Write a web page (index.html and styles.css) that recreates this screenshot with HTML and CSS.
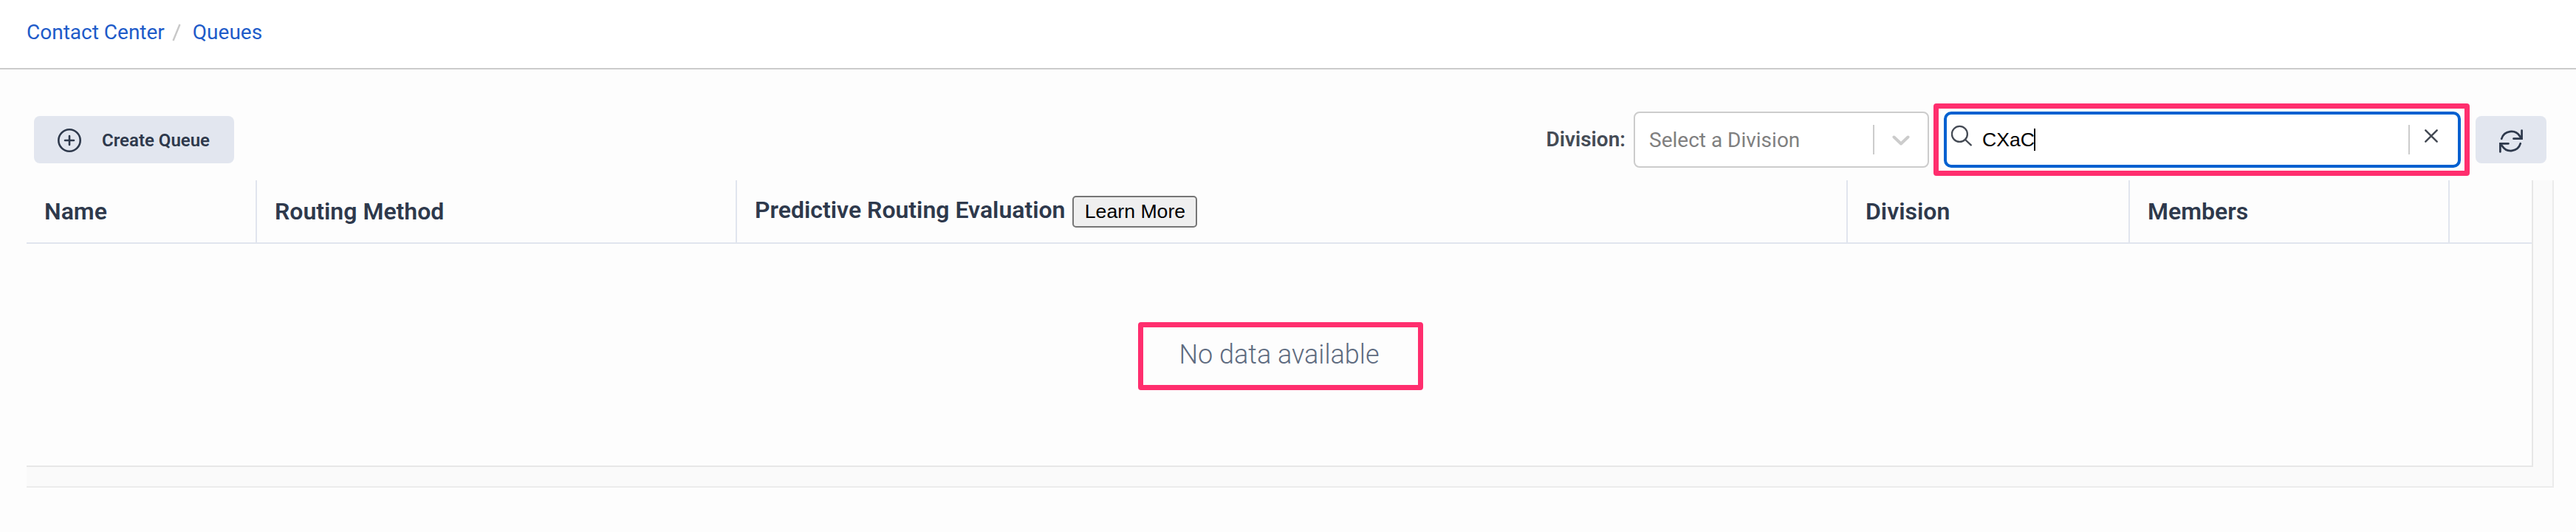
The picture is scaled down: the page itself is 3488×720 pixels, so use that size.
FILE: index.html
```html
<!DOCTYPE html>
<html lang="en">
<head>
<meta charset="utf-8">
<title>Queues</title>
<link rel="stylesheet" href="styles.css">
</head>
<body>
<header class="topbar">
  <nav class="breadcrumb">
    <a class="crumb" href="#">Contact Center</a>
    <svg class="slash" width="12" height="24" viewBox="0 0 12 24"><path d="M10.500 1 1.500 23" stroke="#c8c8c8" stroke-width="2.400"/></svg>
    <a class="crumb" href="#">Queues</a>
  </nav>
</header>
<main class="content">
  <div class="toolbar">
    <button class="btn create">
      <svg width="32" height="32" viewBox="0 0 32 32" fill="none" stroke="#2e394c" stroke-width="2.600" stroke-linecap="round"><circle cx="16" cy="16" r="14.700"/><path d="M16 10v12M10 16h12"/></svg>
      <span class="create-label">Create Queue</span>
    </button>
    <div class="filters">
      <span class="filter-label">Division:</span>
      <div class="select">
        <span class="placeholder">Select a Division</span>
        <span class="separator"></span>
        <svg class="chevron" width="24" height="16" viewBox="0 0 24 16" fill="none" stroke="#ccc" stroke-width="4" stroke-linecap="round" stroke-linejoin="round"><path d="M2.500 3.500 12 12.500l9.500-9"/></svg>
      </div>
      <div class="search-highlight">
        <div class="search">
          <svg class="magnifier" width="30" height="30" viewBox="0 0 30 30" fill="none" stroke="#444a54" stroke-width="2.300" stroke-linecap="round"><circle cx="11.400" cy="12.400" r="10.500"/><path d="M19 20l7.800 7.400"/></svg>
          <span class="query">CXaC</span><span class="caret"></span>
          <span class="separator clear-sep"></span>
          <svg class="clear" width="20" height="20" viewBox="0 0 20 20" stroke="#444a54" stroke-width="2.500" stroke-linecap="round"><path d="M2.300 2.300 17.700 17.700M17.700 2.300 2.300 17.700"/></svg>
        </div>
      </div>
      <button class="btn refresh">
        <svg width="32" height="32" viewBox="0 0 32 32" fill="none" stroke="#2e394c" stroke-width="2.700" stroke-linecap="round"><path d="M3.200 12.800A13.700 13.700 0 0 1 28 9.500L30.500 12.300M30.600 1.500v11.200H19.500"/><path d="M28.800 19.200A13.700 13.700 0 0 1 4 22.500L1.500 19.700M1.400 30.500V19.300H12.500"/></svg>
      </button>
    </div>
  </div>
  <section class="panel">
    <div class="table">
      <div class="thead">
        <div class="th">Name</div>
        <div class="th">Routing Method</div>
        <div class="th predictive"><span class="th-text">Predictive Routing Evaluation</span><button class="learn">Learn More</button></div>
        <div class="th">Division</div>
        <div class="th">Members</div>
        <div class="th last"></div>
      </div>
      <div class="empty"><div class="empty-highlight">No data available</div></div>
    </div>
  </section>
</main>
</body>
</html>
```

FILE: styles.css
```css
* { box-sizing: border-box; }
body {
  margin: 0;
  height: 720px;
  overflow: hidden;
  background: #fdfdfd;
  color: #2e394c;
  font-family: Roboto, sans-serif;
}
svg { display: block; flex: none; }
button { font: inherit; color: inherit; border: 0; padding: 0; }

.topbar {
  height: 94px;
  padding: 27px 36px 0;
  background: #fff;
  border-bottom: 2px solid #ccc;
}
.breadcrumb { display: flex; align-items: flex-start; font-size: 28px; line-height: 33px; }
.crumb { color: #205bc9; text-decoration: none; white-space: nowrap; }
.slash { margin: 5px 16px 0 10px; }

.content { padding: 46px 30px 0 36px; }
.toolbar {
  display: flex;
  justify-content: space-between;
  height: 104px;
  padding: 0 10px;
}
.btn { display: flex; align-items: center; height: 64px; margin-top: 17px; border-radius: 8px; background: #e2e6ef; }
.create { width: 271px; padding: 2px 0 0 32px; gap: 28px; font-size: 24px; font-weight: 600; }
.create-label { line-height: 28px; white-space: nowrap; }
.filters { display: flex; align-items: flex-start; }
.filter-label { margin: 32px 11px 0 0; font-size: 28px; line-height: 33px; font-weight: 600; color: #444b55; white-space: nowrap; }
.select {
  display: flex;
  align-items: center;
  width: 400px;
  height: 76px;
  margin-top: 11px;
  padding: 0 24px 0 19px;
  border: 2px solid #ccc;
  border-radius: 8px;
  background: #fff;
}
.placeholder { flex: 1; font-size: 28px; line-height: 33px; color: #808080; }
.separator { flex: none; width: 2px; height: 40px; background: #ccc; }
.chevron { margin: 2px 0 0 24px; }
.search-highlight {
  width: 726px;
  height: 98px;
  margin-left: 6px;
  padding: 4px 5px 4px 7px;
  border: 7px solid #ff2e6e;
  border-radius: 4px;
}
.search {
  display: flex;
  align-items: flex-start;
  width: 700px;
  height: 76px;
  padding: 14px 26px 0 6px;
  border: 4px solid #0060d0;
  border-radius: 10px;
  background: #fff;
}
.query { margin-left: 12px; padding-top: 5px; font: 26.667px/31px "Liberation Sans", Arial, sans-serif; color: #000; }
.caret { width: 2px; height: 30px; margin: 5px 0 0 -1px; background: #000; }
.clear-sep { margin-left: auto; }
.clear { margin: 5px 0 0 19px; }
.refresh { justify-content: center; width: 96px; margin-left: 8px; padding-top: 4px; }

.panel { width: 3422px; height: 416px; padding: 0 26px 26px 0; background: #fafafa; border: solid #ececec; border-width: 0 2px 2px 0; }
.table { height: 388px; background: #fdfdfd; border: solid #e7e7e7; border-width: 0 2px 2px 0; }
.thead {
  display: grid;
  grid-template-columns: 312px 650px 1504px 382px 433px 1fr;
  height: 86px;
  border-bottom: 2px solid #e1e5ee;
}
.th { padding: 24px 0 0 24px; border-right: 2px solid #e1e5ee; font-size: 32px; line-height: 36px; font-weight: 600; white-space: nowrap; }
.last { border-right: 0; }
.predictive { display: flex; align-items: flex-start; padding-top: 21px; }
.th-text { line-height: 38px; }
.learn {
  width: 169px;
  height: 43px;
  margin-left: 10px;
  border: 2px solid #767676;
  border-radius: 5px;
  background: #efefef;
  color: #000;
  font: 26.667px/31px "Liberation Sans", Arial, sans-serif;
}
.empty { display: flex; justify-content: center; padding: 106px 0 0 3px; }
.empty-highlight {
  width: 386px;
  height: 92px;
  padding: 16px 3px 0 0;
  border: 7px solid #ff2e6e;
  border-radius: 4px;
  text-align: center;
  font-size: 36px;
  line-height: 42px;
  font-weight: 300;
  color: #5e6b80;
  white-space: nowrap;
}
```
